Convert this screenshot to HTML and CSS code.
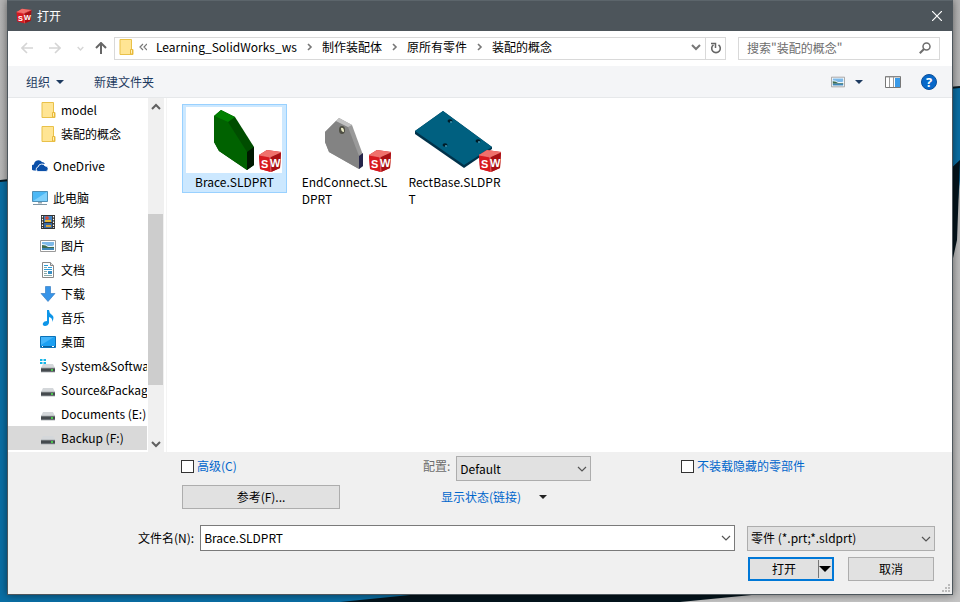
FILE: index.html
```html
<!DOCTYPE html>
<html lang="zh-CN">
<head>
<meta charset="utf-8">
<title>打开</title>
<link rel="stylesheet" href="styles.css">
</head>
<body>
<svg class="wallpaper" viewBox="0 0 960 602" preserveAspectRatio="none" aria-hidden="true">
  <defs>
    <linearGradient id="wall-gray" x1="0" y1="0" x2="0" y2="1"><stop offset="0" stop-color="#b4b4b4"/><stop offset="1" stop-color="#c4c4c4"/></linearGradient>
  </defs>
  <rect width="960" height="602" fill="url(#wall-gray)"/>
  <path d="M0 181 480 130 960 87V180L954 240 680 602H0z" fill="#0a6fa5"/>
  <path d="M0 181 480 130 960 87" fill="none" stroke="#0a1a22" stroke-width="2"/>
  <path d="M340 602 420 594 700 400 960 160 957 240 900 500 762 594 680 602z" fill="#04141c"/>
</svg>

<svg class="defs" aria-hidden="true">
  <symbol id="sw" viewBox="0 0 24 24">
    <path d="M1 6 9 1 23 3 22 19 13 23 2 20z" fill="#c8171d"/>
    <path d="M1 6 9 1 23 3 12 8z" fill="#f0706c"/>
    <path d="M1 6 12 8 13 23 2 20z" fill="#d71920"/>
    <path d="M12 8 23 3 22 19 13 23z" fill="#a80f14"/>
    <path d="M1 6 12 8 23 3M12 8 13 23" fill="none" stroke="#f58f8a" stroke-width=".7"/>
    <text x="3" y="19" class="cube-letter">S</text>
    <text x="12" y="18" class="cube-letter">W</text>
  </symbol>
  <symbol id="folder" viewBox="0 0 16 16">
    <path d="M2 .5h11.5v10H15v5H2z" fill="#ffe594" stroke="#e9c149"/>
    <path d="M12.500 15V10.500h2V15z" fill="#fff0b8" stroke="#e9b93a"/>
  </symbol>
  <symbol id="picture" viewBox="0 0 16 16">
    <path d="M.5 2.500h15v11H.5z" fill="#fff" stroke="#9a9a9a"/>
    <path d="M2 4h12v4H2z" fill="#7db9e8"/>
    <path d="M2 6q4 0 6 2t6-1v2H2z" fill="#e6f2fa"/>
    <path d="M2 7q4 0 6 2h6v1H2z" fill="#3d6b4e"/>
    <path d="M2 10h12v2H2z" fill="#3f87b8"/>
  </symbol>
  <symbol id="drive" viewBox="0 0 16 16">
    <path d="M3 6h10l2 4H1z" fill="#d4d7da"/>
    <path d="M1 10h14v4H1z" fill="#454a4e"/>
    <path d="M1 10h14M1 14h14" stroke="#a4a9ad" stroke-width=".8"/>
    <path d="M11 12h2" stroke="#4cf04c" stroke-width="1.500"/>
  </symbol>
  <symbol id="chev-down" viewBox="0 0 10 10"><path d="M1 3 5 7 9 3" fill="none" stroke="currentColor" stroke-width="1.200"/></symbol>
  <symbol id="chev-bold" viewBox="0 0 10 10"><path d="M1 3 5 7 9 3" fill="none" stroke="currentColor" stroke-width="2"/></symbol>
  <symbol id="chev-right" viewBox="0 0 6 10"><path d="M1 2 4 5 1 8" fill="none" stroke="currentColor" stroke-width="1.600"/></symbol>
  <symbol id="caret" viewBox="0 0 8 4"><path d="M0 0h8L4 4z" fill="currentColor"/></symbol>
</svg>

<main class="dialog">
  <header class="titlebar">
    <svg class="i16"><use href="#sw"/></svg>
    <h1>打开</h1>
    <button class="close" aria-label="关闭"><svg viewBox="0 0 10 10"><path d="M0 0 10 10M10 0 0 10" stroke="#fff" stroke-width="1.200"/></svg></button>
  </header>

  <nav class="address-row">
    <div class="history">
      <button class="faint" aria-label="后退"><svg viewBox="0 0 12 12"><path d="M12 6H1M6 1 1 6l5 5" fill="none" stroke="currentColor" stroke-width="1.600"/></svg></button>
      <button class="faint" aria-label="前进"><svg viewBox="0 0 12 12"><path d="M0 6h11M6 1l5 5-5 5" fill="none" stroke="currentColor" stroke-width="1.600"/></svg></button>
      <button class="faint recent" aria-label="最近的位置"><svg><use href="#chev-bold"/></svg></button>
      <button aria-label="上移"><svg viewBox="0 0 12 12"><path d="M6 12V1M1 6l5-5 5 5" fill="none" stroke="currentColor" stroke-width="2"/></svg></button>
    </div>
    <div class="address">
      <svg class="i16"><use href="#folder"/></svg>
      <svg class="back-chev" viewBox="0 0 8 8"><path d="M4 1 1 4l3 3M8 1 5 4l3 3" fill="none" stroke="#777" stroke-width="1.200"/></svg>
      <a href="#">Learning_SolidWorks_ws</a>
      <svg class="sep"><use href="#chev-right"/></svg>
      <a href="#">制作装配体</a>
      <svg class="sep"><use href="#chev-right"/></svg>
      <a href="#">原所有零件</a>
      <svg class="sep"><use href="#chev-right"/></svg>
      <a href="#">装配的概念</a>
      <button class="drop" aria-label="历史"><svg><use href="#chev-bold"/></svg></button>
      <button class="refresh" aria-label="刷新"><svg viewBox="0 0 12 12"><path d="M3.500 2.800A4.300 4.300 0 1 0 8.500 2.800" fill="none" stroke="currentColor" stroke-width="1.600"/><path d="M1 1.500h4.500V6" fill="none" stroke="currentColor" stroke-width="1.500"/></svg></button>
    </div>
    <div class="search">
      <input type="search" aria-label="搜索" placeholder="搜索&quot;装配的概念&quot;">
      <svg viewBox="0 0 12 12"><circle cx="7.500" cy="4.500" r="3.500" fill="none" stroke="#6d6d6d" stroke-width="1.500"/><path d="M5 7 .8 11.200" stroke="#6d6d6d" stroke-width="2"/></svg>
    </div>
  </nav>

  <div class="toolbar">
    <button>组织<svg class="caret"><use href="#caret"/></svg></button>
    <button>新建文件夹</button>
    <div class="views">
      <button aria-label="更改视图"><svg class="i14"><use href="#picture"/></svg><svg class="caret"><use href="#caret"/></svg></button>
      <button aria-label="预览窗格"><svg class="i16" viewBox="0 0 16 16"><path d="M.5 2.500h15v11H.5z" fill="#fff" stroke="#777"/><path d="M1 3h14" stroke="#999"/><path d="M4.500 3v10M8.500 3v10" stroke="#999"/><path d="M10 4h5v9h-5z" fill="#3a9ae8"/></svg></button>
      <button aria-label="帮助"><svg class="i16" viewBox="0 0 16 16"><circle cx="8" cy="8" r="7.500" fill="#0768c9" stroke="#0a4f9a"/><text x="8" y="12.500" text-anchor="middle" class="help-mark">?</text></svg></button>
    </div>
  </div>

  <section class="content">
    <ul class="tree">
      <li class="deep"><svg class="i16"><use href="#folder"/></svg>model</li>
      <li class="deep"><svg class="i16"><use href="#folder"/></svg>装配的概念</li>
      <li class="root"><svg class="i16" viewBox="0 0 16 16"><path d="M2.500 12.500a3 3 0 0 1-.5-6A4.500 4.500 0 0 1 10 4q2 0 3 2-6-1-7 3-2 1-2 3.500z" fill="#0a4fa8"/><path d="M6 13.500a2.300 2.300 0 0 1 0-4.500 3.800 3.800 0 0 1 7-1A2.800 2.800 0 0 1 14 13.500z" fill="#0a4fa8" stroke="#fff" stroke-width=".8"/></svg>OneDrive</li>
      <li class="root"><svg class="i16" viewBox="0 0 16 16"><path d="M.5 1.500h15v10H.5z" fill="#4cb8f5" stroke="#4f8fb5"/><path d="M1 11 15 2v9z" fill="#7fd0fb"/><path d="M6 12h4v1.500H6z" fill="#9aa8b0"/><path d="M1 14.500h14" stroke="#7f95a3"/></svg>此电脑</li>
      <li class="deep"><svg class="i16" viewBox="0 0 16 16"><path d="M1 1h14v14H1z" fill="#333"/><path d="M4 2h8v6H4z" fill="#4585c5"/><path d="M4 9h8v5H4z" fill="#386aa5"/><circle cx="7" cy="4" r="1.800" fill="#e04b30"/><path d="M5 6h6v2H5z" fill="#e5b83a"/><path d="M6 11h5v2H6z" fill="#d9a53a"/><path d="M2.500 2v12M13.500 2v12" stroke="#fff" stroke-width="1.200" stroke-dasharray="1.500 1.300"/></svg>视频</li>
      <li class="deep"><svg class="i16"><use href="#picture"/></svg>图片</li>
      <li class="deep"><svg class="i16" viewBox="0 0 16 16"><path d="M2.500.5h8l3 3v12h-11z" fill="#fff" stroke="#888"/><path d="M10.500.5v3h3" fill="#ddd" stroke="#888"/><path d="M4 3.500h4M8 5.500h4M4 7.500h8" stroke="#2d9bd8"/><path d="M4 5.500h3M4 9.500h3M4 11.500h3M4 13.500h8" stroke="#8aa"/><path d="M8 9h4v3H8z" fill="#3b8fc4"/></svg>文档</li>
      <li class="deep"><svg class="i16" viewBox="0 0 16 16"><path d="M5.500.5h5v7h4.500L8 15.500 1 7.500h4.500z" fill="#3794e8" stroke="#2874bd" stroke-width=".6"/></svg>下载</li>
      <li class="deep"><svg class="i16" viewBox="0 0 16 16"><path d="M7 0h2q0 3 3 5t0 7q1-4-3-5v6q-1 3-4 3-3-.500-2-3 1-2 4-2z" fill="#0d95e8"/></svg>音乐</li>
      <li class="deep"><svg class="i16" viewBox="0 0 16 16"><path d="M.5 2.500h15v11H.5z" fill="#1ca0f2" stroke="#0b72b8"/><path d="M1 12.500h14" stroke="#0c5f9c"/><path d="M2 12.500h1M12 12.500h2" stroke="#fff"/><path d="M1 11 14 3H1z" fill="#45b5fa"/></svg>桌面</li>
      <li class="deep"><svg class="i16" viewBox="0 0 16 16"><use href="#drive"/><path d="M0 1h2.500v2H0zM3.500 1H6v2H3.500zM0 4h2.500v2H0zM3.500 4H6v2H3.500z" fill="#16b5e8"/></svg>System&amp;Software</li>
      <li class="deep"><svg class="i16"><use href="#drive"/></svg>Source&amp;Package</li>
      <li class="deep"><svg class="i16"><use href="#drive"/></svg>Documents (E:)</li>
      <li class="deep current"><svg class="i16"><use href="#drive"/></svg>Backup (F:)</li>
    </ul>
    <div class="scrollbar">
      <button aria-label="向上滚动"><svg class="flip"><use href="#chev-bold"/></svg></button>
      <div class="thumb-track"><div class="thumb"></div></div>
      <button aria-label="向下滚动"><svg><use href="#chev-bold"/></svg></button>
    </div>
    <div class="files">
      <figure class="file selected">
        <svg viewBox="186 107 96 66">
          <path d="M214 116 221 110 235 117 254 147 254 165 247 170 219 151 214 142z" fill="#004d00"/>
          <path d="M214 116 228 122 247 152 247 170 219 151 214 142z" fill="#006200"/>
          <path d="M214 116 221 110 235 117 228 122z" fill="#008000"/>
          <path d="M247 152 254 147 254 165 247 170z" fill="#001800"/>
          <use href="#sw" x="258" y="149" width="24" height="24"/>
        </svg>
        <figcaption>Brace.SLDPRT</figcaption>
      </figure>
      <figure class="file">
        <svg viewBox="296 107 96 66">
          <path d="M325 132 339 118 352 125 363 155 363 166 359 169 329 152 325 142z" fill="#9a9a9a"/>
          <path d="M325 132 336 121 348 127 359 156 359 169 329 152 325 142z" fill="#838383"/>
          <path d="M336 121 339 118 352 125 348 127z" fill="#c2c2c2"/>
          <path d="M359 156 363 153 363 166 359 169z" fill="#25254a"/>
          <ellipse cx="342" cy="130" rx="3" ry="4" fill="#4d4d42"/><path d="M341 128q3-1 3 4-3 0-3-4" fill="#eeeec8"/>
          <use href="#sw" x="368" y="149" width="24" height="24"/>
        </svg>
        <figcaption>EndConnect.SL<br>DPRT</figcaption>
      </figure>
      <figure class="file">
        <svg viewBox="406 107 96 66">
          <path d="M415 131 443 111 492 147 492 149 464 168 415 134z" fill="#00324a"/>
          <path d="M415 131 443 111 492 147 464 165z" fill="#006080"/>
          <g fill="#001c28"><ellipse cx="450" cy="121" rx="2.500" ry="1.800"/><ellipse cx="478" cy="141" rx="2.500" ry="1.800"/><ellipse cx="445" cy="145" rx="2.500" ry="1.800"/></g>
          <g fill="#3c94b0"><circle cx="451" cy="122" r="1"/><circle cx="479" cy="142" r="1"/><circle cx="446" cy="146" r="1"/></g>
          <use href="#sw" x="478" y="149" width="24" height="24"/>
        </svg>
        <figcaption>RectBase.SLDPR<br>T</figcaption>
      </figure>
    </div>
  </section>

  <form class="options">
    <div class="settings">
      <label class="check"><input type="checkbox">高级(C)</label>
      <div class="config">
        <label for="config">配置:</label>
        <span class="select"><select id="config"><option>Default</option></select><svg><use href="#chev-down"/></svg></span>
      </div>
      <label class="check"><input type="checkbox">不装载隐藏的零部件</label>
      <button type="button" class="btn reference">参考(F)...</button>
      <div class="state"><a href="#">显示状态(链接)</a><button type="button" aria-label="显示状态"><svg class="caret"><use href="#caret"/></svg></button></div>
    </div>
    <div class="filename">
      <label for="name">文件名(N):</label>
      <span class="combo"><input id="name" type="text" value="Brace.SLDPRT"><button type="button" aria-label="文件列表"><svg><use href="#chev-down"/></svg></button></span>
      <span class="select type"><select aria-label="文件类型"><option>零件 (*.prt;*.sldprt)</option></select><svg><use href="#chev-down"/></svg></span>
    </div>
    <div class="actions">
      <div class="split"><button type="button" class="open">打开</button><button type="button" class="more" aria-label="打开方式"><svg viewBox="0 0 12 6"><path d="M0 0h12L6 6z"/></svg></button></div>
      <button type="button" class="btn cancel">取消</button>
    </div>
    <svg class="grip" viewBox="0 0 8 8"><path d="M6 0h2v2H6zM3 3h2v2H3zM6 3h2v2H6zM0 6h2v2H0zM3 6h2v2H3zM6 6h2v2H6z" fill="#bbb"/></svg>
  </form>
</main>
</body>
</html>
```
FILE: styles.css
```css
* { box-sizing: border-box; }
html, body { height: 100%; }
body {
  margin: 0;
  padding: 0 7px 7px;
  overflow: hidden;
  font: 12px/16px "Noto Sans CJK SC", sans-serif;
  color: #000;
}
button, input, select { font: inherit; color: inherit; margin: 0; }
button { padding: 0; border: 0; background: none; }
a { color: inherit; text-decoration: none; }
svg { display: block; flex: none; width: 10px; height: 10px; }
symbol { overflow: visible; }
h1 { margin: 0; font-size: 12px; font-weight: 400; }

.wallpaper { position: absolute; inset: 0; z-index: -1; width: 100%; height: 100%; }
.defs { position: absolute; width: 0; height: 0; }
.i16 { width: 16px; height: 16px; }
.i14 { width: 14px; height: 14px; }
.caret { width: 8px; height: 4px; }
.cube-letter { font: bold 11px "Liberation Sans", sans-serif; fill: #fff; }
.help-mark { font: bold 13px "Open Sans", sans-serif; fill: #fff; }

.dialog {
  display: flex;
  flex-direction: column;
  height: 100%;
  border: 1px solid #4d565c;
  border-top-color: #5c656b;
  background: #fff;
  box-shadow: 0 0 8px rgba(0, 0, 0, .5);
}

.titlebar { display: flex; align-items: center; gap: 5px; height: 30px; padding: 0 10px 0 8px; background: #4d555b; color: #fff; }
.close { margin-left: auto; }

.address-row { display: flex; align-items: center; height: 34px; margin-bottom: 1px; padding: 0 12px 0 13px; }
.history { display: flex; align-items: center; color: #666; }
.history button { margin-right: 16px; }
.history svg { width: 12px; height: 12px; }
.history .faint { color: #d5d5d5; }
.history .recent { margin-right: 11px; }
.history .recent svg { width: 7px; height: 7px; }
.history button:last-child { margin-right: 7px; }
.address { flex: 1; display: flex; align-items: center; height: 23px; padding: 0 0 2px 3px; border: 1px solid #d9d9d9; }
.back-chev { width: 8px; height: 8px; margin: 0 9px 0 5px; }
.sep { width: 6px; margin: 0 9px 0 10px; color: #777; }
.drop { margin-left: auto; padding: 0 4px; color: #777; }
.refresh { display: grid; place-items: center; width: 20px; height: 21px; margin-bottom: -2px; border-left: 1px solid #d9d9d9; color: #666; }
.refresh svg, .search svg { width: 12px; height: 12px; }
.search { display: flex; align-items: center; width: 202px; height: 23px; margin-left: 12px; padding: 0 8px; border: 1px solid #d9d9d9; }
.search input { flex: 1; min-width: 0; padding: 0; border: 0; outline: 0; background: none; }
.search input::placeholder { color: #6d6d6d; opacity: 1; }

.toolbar { display: flex; align-items: center; gap: 30px; height: 32px; padding: 0 15px 0 18px; border-bottom: 1px solid #e6e8ea; background: #f4f5f7; color: #1d3a60; }
.toolbar button { display: flex; align-items: center; gap: 6px; }
.views { display: flex; align-items: center; gap: 20px; margin-left: auto; }
.views button:first-child { gap: 10px; margin-right: 2px; }

.content { flex: 1; display: flex; min-height: 0; }
.tree { width: 139px; margin: 0 1px 0 0; padding: 0; overflow: hidden; list-style: none; }
.tree li { display: flex; align-items: center; gap: 5px; height: 24px; white-space: nowrap; }
.tree .deep { padding-left: 32px; }
.tree .root { margin: 8px 0; padding-left: 24px; }
.tree .root + .root { margin-bottom: 0; }
.tree .current { background: #d9d9d9; }
.scrollbar { display: flex; flex-direction: column; width: 16px; background: #f0f0f0; color: #606060; }
.scrollbar button { display: grid; place-items: center; height: 17px; }
.flip { transform: rotate(180deg); }
.thumb-track { flex: 1; display: grid; grid-template-rows: 100fr 172fr 50fr; }
.thumb { grid-row: 2; margin-right: 1px; background: #cdcdcd; }

.files { flex: 1; display: flex; flex-wrap: wrap; align-items: flex-start; align-content: flex-start; gap: 5px; margin-left: 2px; padding: 6px 15px; border-left: 1px solid #f4f4f4; }
.file { width: 105px; margin: 0; padding: 2px 3px; border: 1px solid transparent; line-height: 17px; }
.file svg { width: 96px; height: 66px; background: #fff; }
.file figcaption { width: fit-content; margin: 0 auto; }
.selected { border-color: #99d1ff; background: #cce8ff; }

.options { padding: 4px 17px 13px 0; background: #f0f0f0; }
.settings { display: grid; grid-template-columns: 242px 258px 1fr; row-gap: 4px; padding-left: 173px; }
.check { display: flex; align-items: center; gap: 3px; height: 20px; color: #0066cc; }
.check input { appearance: none; width: 13px; height: 13px; border: 1px solid #333; background: #fff; }
.config { display: flex; gap: 6px; color: #6d6d6d; }
.config label { line-height: 20px; }
.select { position: relative; display: block; width: 135px; height: 25px; color: #000; }
.select select { appearance: none; width: 100%; height: 100%; padding: 0 20px 0 3px; border: 1px solid #adadad; border-radius: 0; background: #e1e1e1; }
.select svg { position: absolute; right: 4px; top: 8px; color: #555; pointer-events: none; }
.btn { height: 24px; border: 1px solid #adadad; background: #e1e1e1; }
.reference { width: 158px; margin-left: 1px; }
.state { display: flex; align-items: center; gap: 18px; padding-left: 18px; color: #0066cc; }
.state button { color: #222; }
.filename { display: flex; align-items: center; margin-top: 16px; padding-left: 130px; }
.filename label { margin-right: 6px; }
.combo { flex: 1; display: flex; align-items: center; height: 26px; margin-right: 12px; border: 1px solid #7a7a7a; background: #fff; }
.combo input { flex: 1; min-width: 0; padding: 0 3px; border: 0; outline: 0; background: none; }
.combo button { padding: 0 3px; color: #555; }
.type { width: 188px; }
.actions { display: flex; justify-content: flex-end; gap: 14px; margin-top: 6px; padding-right: 1px; }
.split { display: flex; width: 86px; height: 24px; border: 2px solid #0078d7; background: #e1e1e1; }
.open { flex: 1; }
.more { width: 14px; margin: 1px 0; border-left: 1px solid #777; }
.more svg { width: 12px; height: 6px; }
.cancel { width: 86px; }
.grip { position: absolute; right: 10px; bottom: 10px; width: 8px; height: 8px; }
```
